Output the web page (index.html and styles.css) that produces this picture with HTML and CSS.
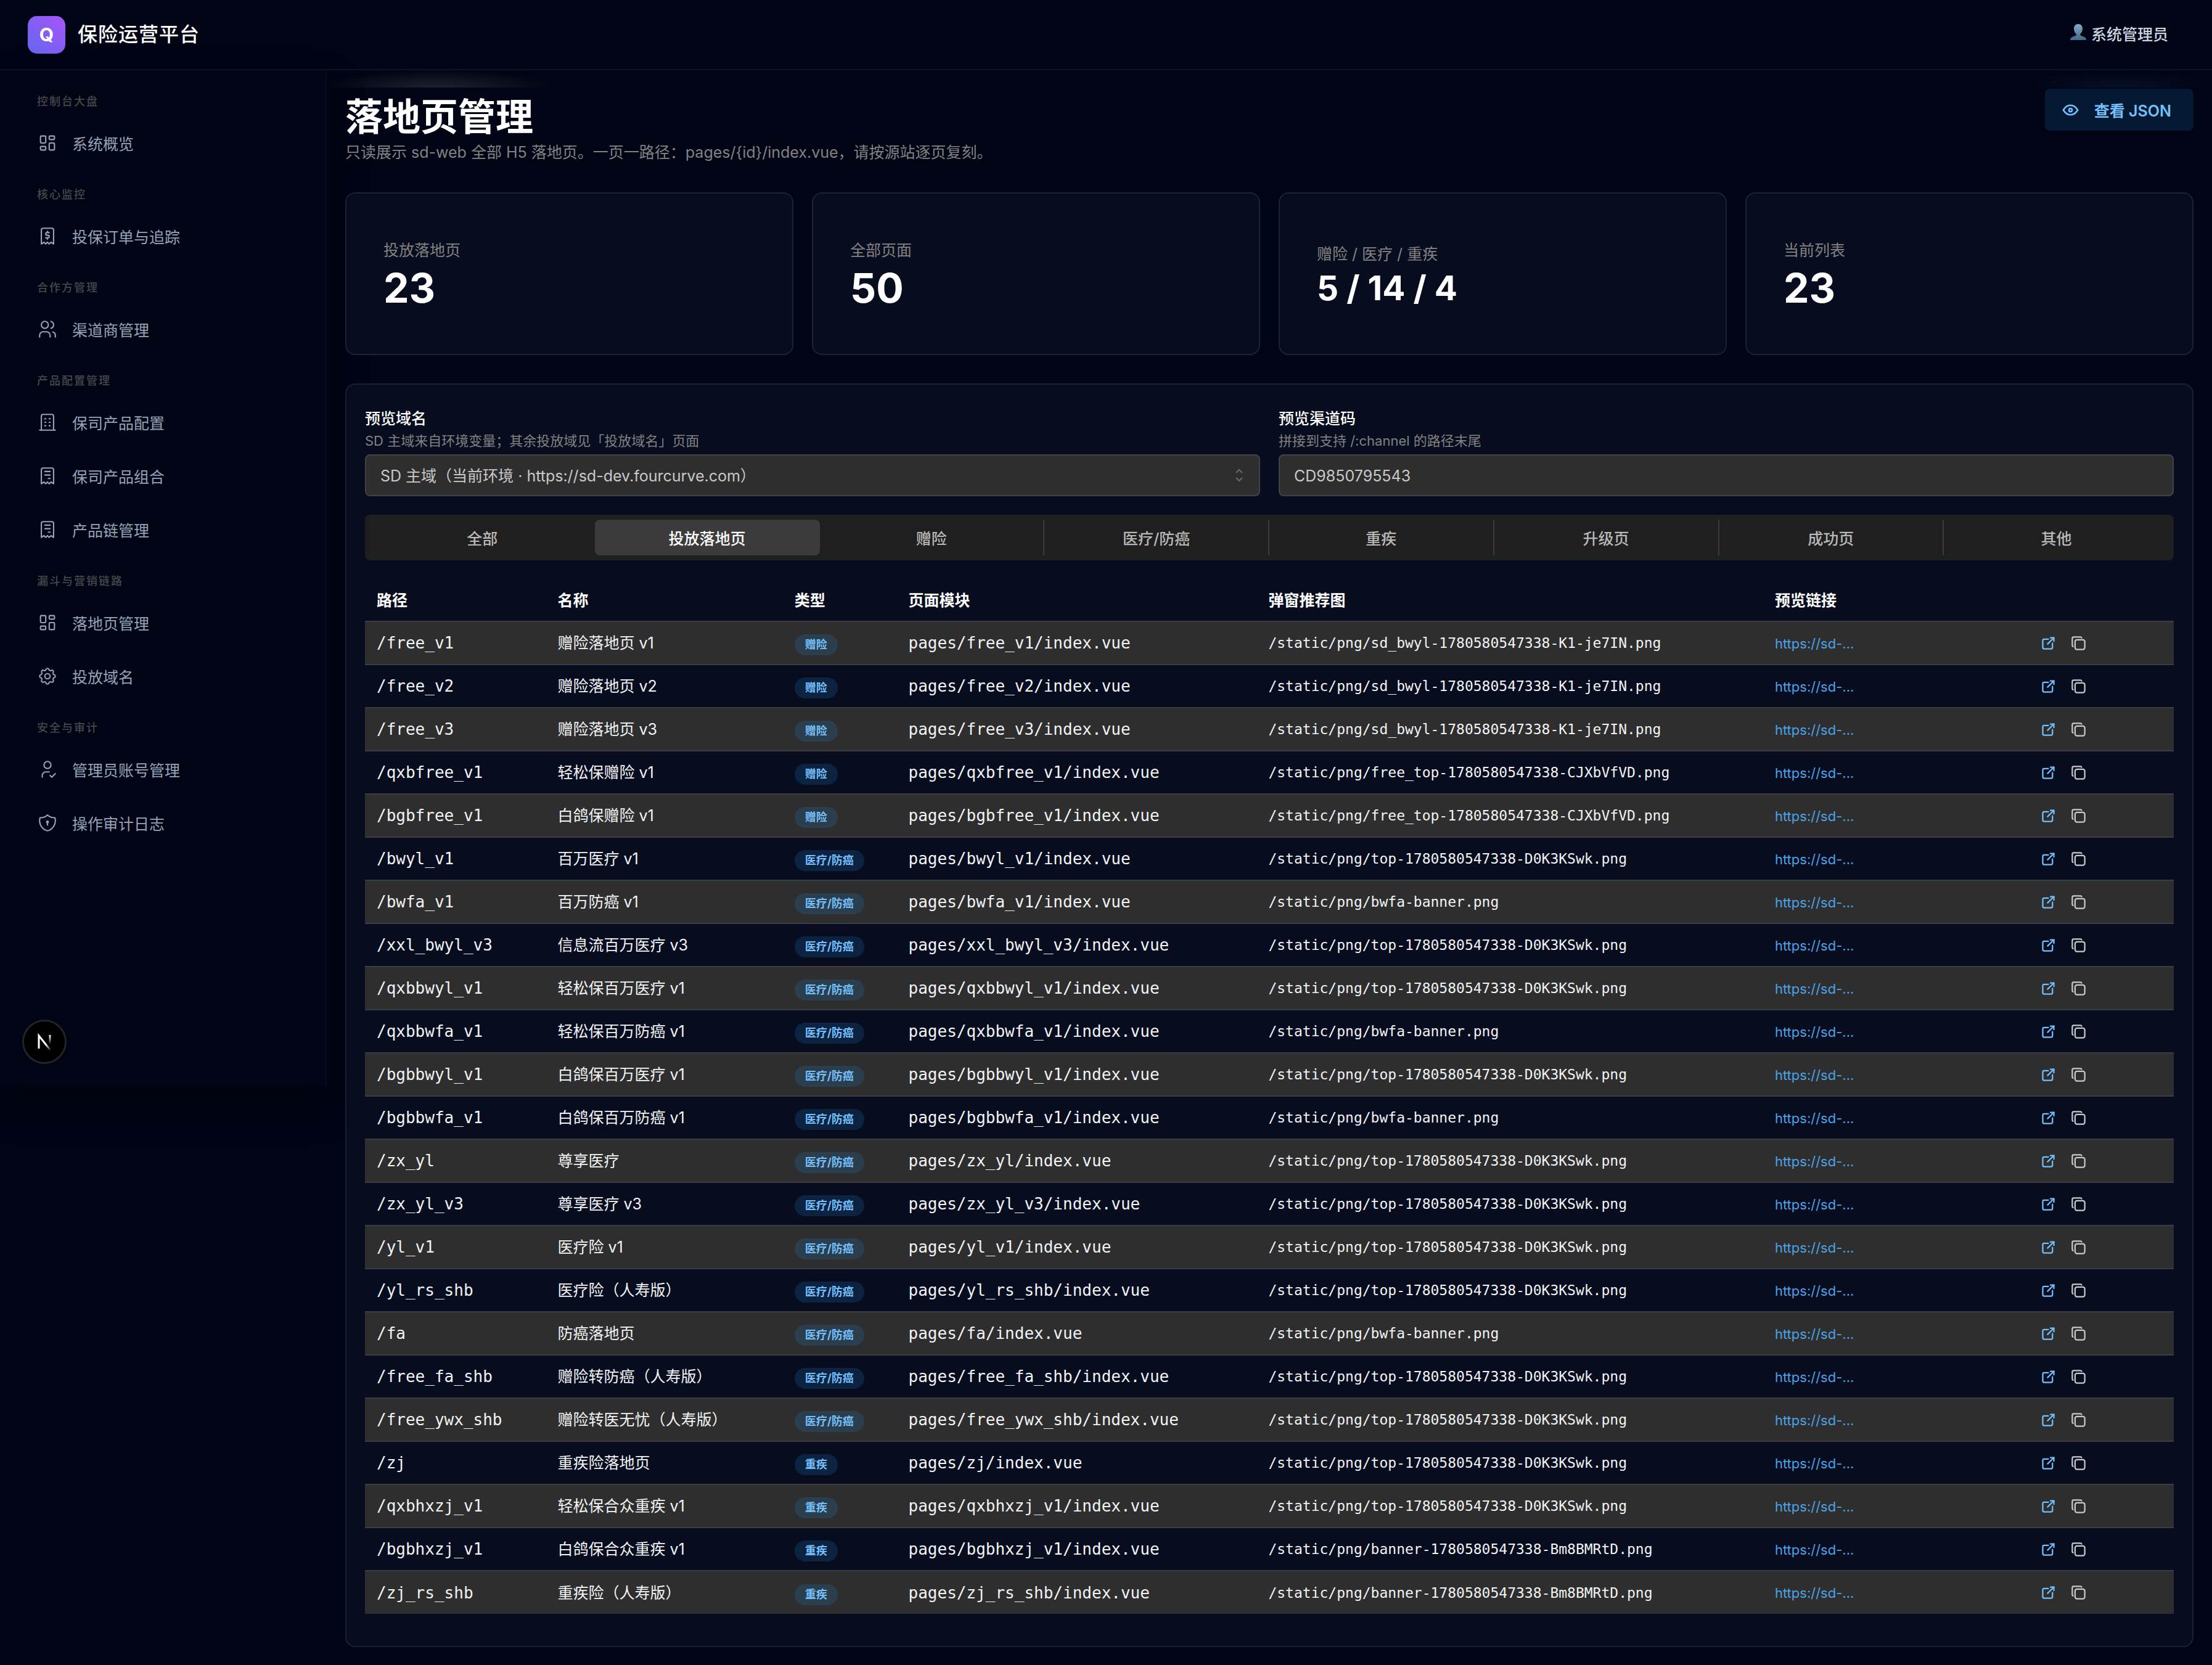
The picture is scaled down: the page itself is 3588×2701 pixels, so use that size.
FILE: index.html
```html
<!DOCTYPE html>
<html lang="zh-CN">
<head>
    <meta charset="UTF-8">
    <meta name="viewport" content="width=device-width, initial-scale=1.0">
    <title>保险运营平台</title>
    <link rel="stylesheet" href="styles.css">
</head>
<body>

<!-- icon sprite -->
<svg class="sprite" aria-hidden="true">
    <symbol id="i-dashboard" viewBox="0 0 24 24">
        <path d="M5 4h4a1 1 0 0 1 1 1v6a1 1 0 0 1 -1 1h-4a1 1 0 0 1 -1 -1v-6a1 1 0 0 1 1 -1"/>
        <path d="M5 16h4a1 1 0 0 1 1 1v2a1 1 0 0 1 -1 1h-4a1 1 0 0 1 -1 -1v-2a1 1 0 0 1 1 -1"/>
        <path d="M15 12h4a1 1 0 0 1 1 1v6a1 1 0 0 1 -1 1h-4a1 1 0 0 1 -1 -1v-6a1 1 0 0 1 1 -1"/>
        <path d="M15 4h4a1 1 0 0 1 1 1v2a1 1 0 0 1 -1 1h-4a1 1 0 0 1 -1 -1v-2a1 1 0 0 1 1 -1"/>
    </symbol>
    <symbol id="i-receipt-dollar" viewBox="0 0 24 24">
        <path d="M5 21v-16a2 2 0 0 1 2 -2h10a2 2 0 0 1 2 2v16l-3 -2l-2 2l-2 -2l-2 2l-2 -2l-3 2"/>
        <path d="M14 8h-2.5a1.5 1.5 0 0 0 0 3h1a1.5 1.5 0 0 1 0 3h-2.5m2 0v1.5m0 -9v1.5"/>
    </symbol>
    <symbol id="i-users" viewBox="0 0 24 24">
        <path d="M5 7a4 4 0 1 0 8 0a4 4 0 1 0 -8 0"/>
        <path d="M3 21v-2a4 4 0 0 1 4 -4h4a4 4 0 0 1 4 4v2"/>
        <path d="M16 3.13a4 4 0 0 1 0 7.75"/>
        <path d="M21 21v-2a4 4 0 0 0 -3 -3.85"/>
    </symbol>
    <symbol id="i-building" viewBox="0 0 24 24">
        <path d="M3 21h18"/>
        <path d="M9 8h1M9 12h1M9 16h1M14 8h1M14 12h1M14 16h1"/>
        <path d="M5 21v-16a2 2 0 0 1 2 -2h10a2 2 0 0 1 2 2v16"/>
    </symbol>
    <symbol id="i-receipt" viewBox="0 0 24 24">
        <path d="M5 21v-16a2 2 0 0 1 2 -2h10a2 2 0 0 1 2 2v16l-3 -2l-2 2l-2 -2l-2 2l-2 -2l-3 2"/>
        <path d="M9 7h6M9 11h6M13 15h2"/>
    </symbol>
    <symbol id="i-settings" viewBox="0 0 24 24">
        <path d="M10.325 4.317c.426 -1.756 2.924 -1.756 3.35 0a1.724 1.724 0 0 0 2.573 1.066c1.543 -.94 3.31 .826 2.37 2.37a1.724 1.724 0 0 0 1.065 2.572c1.756 .426 1.756 2.924 0 3.35a1.724 1.724 0 0 0 -1.066 2.573c.94 1.543 -.826 3.31 -2.37 2.37a1.724 1.724 0 0 0 -2.572 1.065c-.426 1.756 -2.924 1.756 -3.35 0a1.724 1.724 0 0 0 -2.573 -1.066c-1.543 .94 -3.31 -.826 -2.37 -2.37a1.724 1.724 0 0 0 -1.065 -2.572c-1.756 -.426 -1.756 -2.924 0 -3.35a1.724 1.724 0 0 0 1.066 -2.573c-.94 -1.543 .826 -3.31 2.37 -2.37c1 .608 2.296 .07 2.572 -1.065"/>
        <path d="M9 12a3 3 0 1 0 6 0a3 3 0 0 0 -6 0"/>
    </symbol>
    <symbol id="i-user-check" viewBox="0 0 24 24">
        <path d="M8 7a4 4 0 1 0 8 0a4 4 0 0 0 -8 0"/>
        <path d="M6 21v-2a4 4 0 0 1 4 -4h4"/>
        <path d="M15 19l2 2l4 -4"/>
    </symbol>
    <symbol id="i-shield-lock" viewBox="0 0 24 24">
        <path d="M12 3a12 12 0 0 0 8.5 3a12 12 0 0 1 -8.5 15a12 12 0 0 1 -8.5 -15a12 12 0 0 0 8.5 -3"/>
        <path d="M11 11a1 1 0 1 0 2 0a1 1 0 1 0 -2 0"/>
        <path d="M12 12v2.5"/>
    </symbol>
    <symbol id="i-eye" viewBox="0 0 24 24">
        <path d="M10 12a2 2 0 1 0 4 0a2 2 0 0 0 -4 0"/>
        <path d="M21 12c-2.4 4 -5.4 6 -9 6c-3.6 0 -6.6 -2 -9 -6c2.4 -4 5.4 -6 9 -6c3.6 0 6.6 2 9 6"/>
    </symbol>
    <symbol id="i-external" viewBox="0 0 24 24">
        <path d="M12 6h-6a2 2 0 0 0 -2 2v10a2 2 0 0 0 2 2h10a2 2 0 0 0 2 -2v-6"/>
        <path d="M11 13l9 -9"/>
        <path d="M15 4h5v5"/>
    </symbol>
    <symbol id="i-copy" viewBox="0 0 24 24">
        <path d="M7 9.667a2.667 2.667 0 0 1 2.667 -2.667h8.666a2.667 2.667 0 0 1 2.667 2.667v8.666a2.667 2.667 0 0 1 -2.667 2.667h-8.666a2.667 2.667 0 0 1 -2.667 -2.667z"/>
        <path d="M4.012 16.737a2.005 2.005 0 0 1 -1.012 -1.737v-10c0 -1.1 .9 -2 2 -2h10c.75 0 1.158 .385 1.5 1"/>
    </symbol>
</svg>

<header class="topbar">
    <div class="brand">
        <div class="logo">Q</div>
        <span class="brand-name">保险运营平台</span>
    </div>
    <div class="user">
        <svg class="avatar" viewBox="0 0 26 26" aria-hidden="true">
            <defs>
                <linearGradient id="bust" x1="0" y1="0" x2="0" y2="1">
                    <stop offset="0" stop-color="#86aac6"/>
                    <stop offset="1" stop-color="#41688a"/>
                </linearGradient>
            </defs>
            <path fill="url(#bust)" d="M13 0c4.400 0 7 3 7 7.500c0 4 -1.800 7.300 -3.800 8.800v1.900c1 1.800 9.800 1.600 9.800 7.300c0 .300 -.200 .500 -.500 .500h-25c-.300 0 -.500 -.200 -.500 -.500c0 -5.700 8.800 -5.500 9.800 -7.300v-1.900c-2 -1.500 -3.800 -4.800 -3.800 -8.800c0 -4.500 2.600 -7.500 7 -7.500z"/>
        </svg>
        <span>系统管理员</span>
    </div>
</header>

<div class="layout">
    <nav class="sidebar">
        <div class="nav-group">
            <h2>控制台大盘</h2>
            <a href="#"><svg class="icon"><use href="#i-dashboard"/></svg>系统概览</a>
        </div>
        <div class="nav-group">
            <h2>核心监控</h2>
            <a href="#"><svg class="icon"><use href="#i-receipt-dollar"/></svg>投保订单与追踪</a>
        </div>
        <div class="nav-group">
            <h2>合作方管理</h2>
            <a href="#"><svg class="icon"><use href="#i-users"/></svg>渠道商管理</a>
        </div>
        <div class="nav-group">
            <h2>产品配置管理</h2>
            <a href="#"><svg class="icon"><use href="#i-building"/></svg>保司产品配置</a>
            <a href="#"><svg class="icon"><use href="#i-receipt"/></svg>保司产品组合</a>
            <a href="#"><svg class="icon"><use href="#i-receipt"/></svg>产品链管理</a>
        </div>
        <div class="nav-group">
            <h2>漏斗与营销链路</h2>
            <a href="#"><svg class="icon"><use href="#i-dashboard"/></svg>落地页管理</a>
            <a href="#"><svg class="icon"><use href="#i-settings"/></svg>投放域名</a>
        </div>
        <div class="nav-group">
            <h2>安全与审计</h2>
            <a href="#"><svg class="icon"><use href="#i-user-check"/></svg>管理员账号管理</a>
            <a href="#"><svg class="icon"><use href="#i-shield-lock"/></svg>操作审计日志</a>
        </div>
        <button class="dev-badge" aria-label="Dev tools">
            <svg viewBox="0 0 66 66" aria-hidden="true">
                <defs>
                    <linearGradient id="n-diag" x1="36" y1="36" x2="44" y2="47" gradientUnits="userSpaceOnUse">
                        <stop stop-color="#fff"/>
                        <stop offset="1" stop-color="#fff" stop-opacity="0"/>
                    </linearGradient>
                    <linearGradient id="n-stem" x1="42" y1="22" x2="42" y2="37" gradientUnits="userSpaceOnUse">
                        <stop stop-color="#fff"/>
                        <stop offset="1" stop-color="#fff" stop-opacity="0"/>
                    </linearGradient>
                </defs>
                <path d="M24 44v-21l19 24" fill="none" stroke="url(#n-diag)" stroke-width="3"/>
                <path d="M42 22v16" fill="none" stroke="url(#n-stem)" stroke-width="3"/>
            </svg>
        </button>
    </nav>

    <main>
        <div class="page-head">
            <div>
                <h1>落地页管理</h1>
                <p>只读展示 sd-web 全部 H5 落地页。一页一路径：pages/{id}/index.vue，请按源站逐页复刻。</p>
            </div>
            <button class="json-btn"><svg class="icon"><use href="#i-eye"/></svg>查看 JSON</button>
        </div>

        <section class="stats">
            <div class="card"><span>投放落地页</span><strong>23</strong></div>
            <div class="card"><span>全部页面</span><strong>50</strong></div>
            <div class="card"><span>赠险 / 医疗 / 重疾</span><strong class="small">5 / 14 / 4</strong></div>
            <div class="card"><span>当前列表</span><strong>23</strong></div>
        </section>

        <section class="panel">
            <div class="filters">
                <div class="field">
                    <label for="domain">预览域名</label>
                    <p>SD 主域来自环境变量；其余投放域见「投放域名」页面</p>
                    <div class="select-wrap">
                        <select id="domain">
                            <option>SD 主域（当前环境 · https://sd-dev.fourcurve.com）</option>
                        </select>
                        <svg class="chevron" viewBox="0 0 14 22" aria-hidden="true"><path d="M2 7l5 -5l5 5M2 15l5 5l5 -5"/></svg>
                    </div>
                </div>
                <div class="field">
                    <label for="channel">预览渠道码</label>
                    <p>拼接到支持 /:channel 的路径末尾</p>
                    <input type="text" id="channel" value="CD9850795543">
                </div>
            </div>

            <div class="tabs">
                <button>全部</button>
                <button class="active">投放落地页</button>
                <button>赠险</button>
                <button>医疗/防癌</button>
                <button>重疾</button>
                <button>升级页</button>
                <button>成功页</button>
                <button>其他</button>
            </div>

            <table>
                <colgroup>
                    <col class="c-path">
                    <col class="c-name">
                    <col class="c-type">
                    <col class="c-module">
                    <col class="c-image">
                    <col class="c-link">
                    <col class="c-actions">
                </colgroup>
                <thead>
                    <tr>
                        <th>路径</th>
                        <th>名称</th>
                        <th>类型</th>
                        <th>页面模块</th>
                        <th>弹窗推荐图</th>
                        <th>预览链接</th>
                        <th></th>
                    </tr>
                </thead>
                <tbody id="page-list"></tbody>
            </table>
        </section>
    </main>
</div>

<script src="script.js"></script>
</body>
</html>
```
FILE: styles.css
```css
* {
    box-sizing: border-box;
}
body {
    margin: 0;
    background-color: #010414;
    color: #f1f3f5;
    font-family: Inter, "Noto Sans CJK SC", sans-serif;
    font-size: 25px;
    line-height: 38px;
}
h1, h2, p {
    margin: 0;
}
button, input, select {
    font-family: inherit;
    font-size: 25px;
}
.sprite {
    display: none;
}
.icon {
    width: 34px;
    height: 34px;
    flex: none;
    fill: none;
    stroke: currentColor;
    stroke-width: 1.5;
    stroke-linecap: round;
    stroke-linejoin: round;
}

/* top bar */
.topbar {
    display: flex;
    align-items: center;
    justify-content: space-between;
    height: 114px;
    padding: 0 71px 0 45px;
    border-bottom: 2px solid #0e1424;
}
.brand {
    display: flex;
    align-items: center;
    gap: 20px;
}
.logo {
    width: 61px;
    height: 61px;
    border-radius: 15px;
    background: linear-gradient(45deg, #6366f1, #a855f7);
    color: #fff;
    font-size: 30px;
    font-weight: 700;
    line-height: 61px;
    text-align: center;
}
.brand-name {
    color: #fff;
    font-size: 32px;
    font-weight: 500;
    letter-spacing: 1px;
}
.user {
    display: flex;
    align-items: center;
    gap: 8px;
    color: #cbd5e1;
    font-weight: 500;
}
.avatar {
    width: 26px;
    height: 26px;
    margin-bottom: 8px;
}

.layout {
    display: flex;
    align-items: flex-start;
}

/* sidebar */
.sidebar {
    position: relative;
    width: 530px;
    flex: none;
    min-height: 61vh;
    padding: 37px 30px;
    border-right: 2px solid #080d1c;
    box-shadow: 0 30px 60px rgba(0, 0, 0, 0.3);
}
.nav-group {
    display: flex;
    flex-direction: column;
    gap: 7px;
    margin-bottom: 28px;
}
.nav-group h2 {
    margin: 0 30px 8px;
    color: #47484d;
    font-size: 18px;
    font-weight: 500;
    letter-spacing: 2px;
    line-height: 28px;
}
.nav-group a {
    display: flex;
    align-items: center;
    gap: 23px;
    height: 80px;
    padding: 0 30px;
    color: #94a3b8;
    text-decoration: none;
}
.nav-group .icon {
    margin-bottom: 4px;
}
.dev-badge {
    position: absolute;
    left: 36px;
    bottom: 36px;
    width: 72px;
    height: 72px;
    padding: 0;
    border: 3px solid #222326;
    border-radius: 50%;
    background-color: #000;
}
.dev-badge svg {
    display: block;
    width: 100%;
}

/* page */
main {
    flex: 1;
    min-width: 0;
    padding: 30px;
    background: radial-gradient(ellipse 190px 28px at 180px 28px, #20212f, transparent) no-repeat 0 0 / 100% 28px,
        radial-gradient(ellipse 160px 28px at calc(100% - 150px) 28px, #051128, transparent) no-repeat 0 0 / 100% 28px;
}
.page-head {
    display: flex;
    align-items: flex-start;
    justify-content: space-between;
    margin-bottom: 44px;
}
.page-head h1 {
    padding-top: 6px;
    color: #fff;
    font-size: 61px;
    font-weight: 700;
    line-height: 80px;
}
.page-head p {
    padding-bottom: 4px;
    color: #828282;
    line-height: 34px;
}
.json-btn {
    display: flex;
    align-items: center;
    height: 68px;
    padding: 0 36px 0 26px;
    gap: 23px;
    border: none;
    border-radius: 8px;
    background-color: #051933;
    color: #74c0fc;
    font-weight: 600;
}
.json-btn .icon {
    width: 31px;
    height: 31px;
    stroke-width: 2;
}

.stats {
    display: grid;
    grid-template-columns: repeat(4, 1fr);
    gap: 30px;
    margin-bottom: 46px;
}
.card {
    display: flex;
    flex-direction: column;
    justify-content: center;
    height: 264px;
    padding: 8px 60px 0;
    border: 2px solid #1c2333;
    border-radius: 16px;
    background-color: #070c1e;
}
.card span {
    color: #828282;
}
.card strong {
    color: #fff;
    font-size: 66px;
    font-weight: 700;
    line-height: 84px;
}
.card .small {
    font-size: 55px;
    line-height: 72px;
}

.panel {
    padding: 36px 30px 52px;
    border: 2px solid #1a2132;
    border-radius: 16px;
    background-color: #070c1e;
}
.filters {
    display: grid;
    grid-template-columns: 1fr 1fr;
    gap: 30px;
    margin-bottom: 30px;
}
.field label {
    display: block;
    color: #fff;
    font-weight: 500;
}
.field p {
    margin-bottom: 4px;
    color: #828282;
    font-size: 22px;
    line-height: 35px;
}
.field input, .field select {
    display: block;
    width: 100%;
    height: 68px;
    padding: 2px 23px 0;
    border: 2px solid #424242;
    border-radius: 8px;
    background-color: #2e2e2e;
    color: #c9c9c9;
    appearance: none;
}
.select-wrap {
    position: relative;
}
.chevron {
    position: absolute;
    top: 23px;
    right: 27px;
    width: 14px;
    height: 22px;
    fill: none;
    stroke: #6a6a6a;
    stroke-width: 2;
    pointer-events: none;
}

.tabs {
    display: grid;
    grid-template-columns: repeat(8, 1fr);
    padding: 8px;
    margin-bottom: 31px;
    border-radius: 8px;
    background-color: #1f1f1f;
}
.tabs button {
    height: 58px;
    padding: 0;
    border: none;
    border-right: 2px solid #3b3b3b;
    background: none;
    color: #b8b8b8;
    font-weight: 500;
}
.tabs button:first-child, .tabs button:last-child {
    border-right: none;
}
.tabs .active {
    border-right: none;
    border-radius: 8px;
    background-color: #3b3b3b;
    color: #fff;
}

/* table */
table {
    width: 100%;
    table-layout: fixed;
    border-collapse: collapse;
}
.c-path { width: 10%; }
.c-name { width: 13.1%; }
.c-type { width: 6.3%; }
.c-module { width: 19.9%; }
.c-image { width: 28%; }
.c-link { width: 14.4%; }
.c-actions { width: 8.3%; }
th, td {
    height: 70px;
    padding: 0 19px;
    text-align: left;
    white-space: nowrap;
}
th {
    height: 68px;
    color: #fff;
    font-weight: 700;
}
tbody tr {
    border-top: 2px solid #3b3d42;
}
tbody tr:nth-child(odd) {
    background-color: #2e2e2e;
}
.mono {
    font-family: "DejaVu Sans Mono", monospace;
    font-size: 26px;
}
.mono.sm {
    font-size: 23px;
}
.badge {
    display: inline-block;
    height: 34px;
    margin-top: 4px;
    padding: 0 17px;
    border-radius: 17px;
    background-color: rgba(34, 139, 230, 0.18);
    color: #74c0fc;
    font-size: 18px;
    font-weight: 700;
    line-height: 34px;
    vertical-align: middle;
}
.link {
    color: #4ba3e8;
    font-size: 22px;
    text-decoration: none;
}
.actions {
    display: flex;
    gap: 7px;
}
.actions a, .actions button {
    display: flex;
    align-items: center;
    justify-content: center;
    width: 42px;
    height: 42px;
    padding: 0;
    border: none;
    background: none;
    color: #c9c9c9;
}
.actions a {
    color: #74c0fc;
}
.actions .icon {
    width: 27px;
    height: 27px;
    stroke-width: 2;
}
```
FILE: script.js
```js
const TOP = "top-1780580547338-D0K3KSwk.png";
const BWYL = "sd_bwyl-1780580547338-K1-je7IN.png";
const FREE_TOP = "free_top-1780580547338-CJXbVfVD.png";
const BWFA = "bwfa-banner.png";
const BANNER = "banner-1780580547338-Bm8BMRtD.png";

const pages = [
    { id: "free_v1", name: "赠险落地页 v1", type: "赠险", image: BWYL },
    { id: "free_v2", name: "赠险落地页 v2", type: "赠险", image: BWYL },
    { id: "free_v3", name: "赠险落地页 v3", type: "赠险", image: BWYL },
    { id: "qxbfree_v1", name: "轻松保赠险 v1", type: "赠险", image: FREE_TOP },
    { id: "bgbfree_v1", name: "白鸽保赠险 v1", type: "赠险", image: FREE_TOP },
    { id: "bwyl_v1", name: "百万医疗 v1", type: "医疗/防癌", image: TOP },
    { id: "bwfa_v1", name: "百万防癌 v1", type: "医疗/防癌", image: BWFA },
    { id: "xxl_bwyl_v3", name: "信息流百万医疗 v3", type: "医疗/防癌", image: TOP },
    { id: "qxbbwyl_v1", name: "轻松保百万医疗 v1", type: "医疗/防癌", image: TOP },
    { id: "qxbbwfa_v1", name: "轻松保百万防癌 v1", type: "医疗/防癌", image: BWFA },
    { id: "bgbbwyl_v1", name: "白鸽保百万医疗 v1", type: "医疗/防癌", image: TOP },
    { id: "bgbbwfa_v1", name: "白鸽保百万防癌 v1", type: "医疗/防癌", image: BWFA },
    { id: "zx_yl", name: "尊享医疗", type: "医疗/防癌", image: TOP },
    { id: "zx_yl_v3", name: "尊享医疗 v3", type: "医疗/防癌", image: TOP },
    { id: "yl_v1", name: "医疗险 v1", type: "医疗/防癌", image: TOP },
    { id: "yl_rs_shb", name: "医疗险（人寿版）", type: "医疗/防癌", image: TOP },
    { id: "fa", name: "防癌落地页", type: "医疗/防癌", image: BWFA },
    { id: "free_fa_shb", name: "赠险转防癌（人寿版）", type: "医疗/防癌", image: TOP },
    { id: "free_ywx_shb", name: "赠险转医无忧（人寿版）", type: "医疗/防癌", image: TOP },
    { id: "zj", name: "重疾险落地页", type: "重疾", image: TOP },
    { id: "qxbhxzj_v1", name: "轻松保合众重疾 v1", type: "重疾", image: TOP },
    { id: "bgbhxzj_v1", name: "白鸽保合众重疾 v1", type: "重疾", image: BANNER },
    { id: "zj_rs_shb", name: "重疾险（人寿版）", type: "重疾", image: BANNER }
];

document.getElementById("page-list").innerHTML = pages.map(page => `
    <tr>
        <td class="mono">/${page.id}</td>
        <td>${page.name}</td>
        <td><span class="badge">${page.type}</span></td>
        <td class="mono">pages/${page.id}/index.vue</td>
        <td class="mono sm">/static/png/${page.image}</td>
        <td><a class="link" href="#">https://sd-...</a></td>
        <td>
            <div class="actions">
                <a href="#" aria-label="打开"><svg class="icon"><use href="#i-external"/></svg></a>
                <button aria-label="复制"><svg class="icon"><use href="#i-copy"/></svg></button>
            </div>
        </td>
    </tr>
`).join("");
```
